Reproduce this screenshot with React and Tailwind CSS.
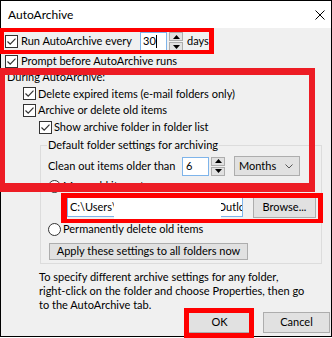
import React from "react";

const Check = () => (
  <span className="w-[13px] h-[13px] border border-[#333333] bg-white flex items-center justify-center shrink-0">
    <svg width="11" height="11" viewBox="0 0 11 11">
      <path d="M1.5 5.5 L4.2 8.2 L9.5 2.6" fill="none" stroke="#333333" strokeWidth="1.2" />
    </svg>
  </span>
);

const Radio = () => (
  <span className="w-[13px] h-[13px] rounded-full border border-[#333333] bg-white shrink-0" />
);

const Spin = () => (
  <div className="w-[14px] h-[19px] flex flex-col gap-[1px] shrink-0">
    <div className="flex-1 bg-[#e1e1e1] border border-[#adadad] flex items-center justify-center">
      <svg width="7" height="4" viewBox="0 0 7 4"><path d="M0 4 L3.5 0 L7 4Z" fill="#000" /></svg>
    </div>
    <div className="flex-1 bg-[#e1e1e1] border border-[#adadad] flex items-center justify-center">
      <svg width="7" height="4" viewBox="0 0 7 4"><path d="M0 0 L3.5 4 L7 0Z" fill="#000" /></svg>
    </div>
  </div>
);

export default function App() {
  return (
    <div className="relative w-[332px] h-[338px] bg-white overflow-hidden font-[Lato,sans-serif] text-[11px] text-black">
      <div className="w-[332px] h-[337px] border border-black bg-[#f0f0f0] flex flex-col">
        {/* title bar */}
        <div className="h-[27px] bg-white flex items-center justify-between pl-[7px] pr-[6px] shrink-0">
          <span className="text-[12px]">AutoArchive</span>
          <svg width="10" height="10" viewBox="0 0 10 10">
            <path d="M0.5 0.5 L9.5 9.5 M9.5 0.5 L0.5 9.5" stroke="#000" strokeWidth="1" />
          </svg>
        </div>

        {/* row 1 */}
        <div className="mt-[4px] h-[20px] flex items-center pl-[4px]">
          <Check />
          <span className="ml-[3px] w-[119px]">Run AutoArchive every</span>
          <div className="w-[27px] h-[19px] bg-white border border-[#7eb4ea] flex items-center pl-[2px]">
            <span>30</span>
            <span className="w-[1px] h-[13px] bg-black" />
          </div>
          <div className="ml-[2px]"><Spin /></div>
          <span className="ml-[4px]">days</span>
        </div>

        {/* row 2 */}
        <div className="h-[16px] mt-[2px] flex items-center pl-[4px]">
          <Check />
          <span className="ml-[3px]">Prompt before AutoArchive runs</span>
        </div>

        <div className="h-[17px] flex items-center pl-[6px]">During AutoArchive:</div>

        <div className="h-[17px] flex items-center pl-[22px]">
          <Check />
          <span className="ml-[2px]">Delete expired items (e-mail folders only)</span>
        </div>
        <div className="h-[17px] flex items-center pl-[22px]">
          <Check />
          <span className="ml-[2px]">Archive or delete old items</span>
        </div>
        <div className="h-[18px] flex items-center pl-[38px]">
          <Check />
          <span className="ml-[2px]">Show archive folder in folder list</span>
        </div>

        {/* group */}
        <fieldset className="mt-[1px] ml-[39px] w-[282px] border border-[#dcdcdc] pb-[3px]">
          <legend className="ml-[6px] px-[1px] leading-[16px]">Default folder settings for archiving</legend>
          <div className="h-[20px] mt-[3px] flex items-center pl-[7px]">
            <span className="w-[134px]">Clean out items older than</span>
            <div className="w-[27px] h-[19px] bg-white border border-[#7eb4ea] flex items-center pl-[3px]">6</div>
            <div className="ml-[2px]"><Spin /></div>
            <div className="ml-[9px] w-[66px] h-[20px] bg-[#e1e1e1] border border-[#adadad] flex items-center justify-between pl-[4px] pr-[6px]">
              <span>Months</span>
              <svg width="8" height="5" viewBox="0 0 8 5"><path d="M0.5 0.5 L4 4 L7.5 0.5" fill="none" stroke="#555" strokeWidth="1" /></svg>
            </div>
          </div>
          <div className="h-[20px] flex items-center pl-[7px]">
            <Radio />
            <span className="ml-[2px]">Move old items to:</span>
          </div>
          <div className="h-[22px] flex items-center pl-[26px]">
            <div className="w-[176px] h-[20px] bg-white border border-[#7eb4ea] flex items-center pl-[2px] overflow-hidden whitespace-nowrap">
              <span>C:\Users\</span>
              <span className="flex-1" />
              <span className="-mr-[3px]">Outlo</span>
            </div>
            <div className="ml-[10px] w-[63px] h-[22px] bg-[#e1e1e1] border border-[#adadad] flex items-center justify-center">Browse...</div>
          </div>
          <div className="h-[16px] mt-[3px] flex items-center pl-[7px]">
            <Radio />
            <span className="ml-[2px]">Permanently delete old items</span>
          </div>
          <div className="mt-[6px] ml-[8px] w-[199px] h-[17px] bg-[#e1e1e1] border border-[#adadad] flex items-center justify-center">
            Apply these settings to all folders now
          </div>
        </fieldset>

        <div className="mt-[6px] pl-[38px] leading-[14px]">
          To specify different archive settings for any folder,<br />
          right-click on the folder and choose Properties, then go<br />
          to the AutoArchive tab.
        </div>

        <div className="mt-auto mb-[3px] flex justify-end gap-[10px] pr-[1px]">
          <div className="w-[67px] h-[21px] bg-[#e1e1e1] border border-[#adadad] flex items-center justify-center">OK</div>
          <div className="w-[67px] h-[21px] bg-[#e1e1e1] border border-[#adadad] flex items-center justify-center">Cancel</div>
        </div>
      </div>

      {/* redaction */}
      <div className="absolute left-[114px] top-[197px] w-[107px] h-[24px] bg-white" />

      {/* red annotation boxes */}
      <div className="absolute left-0 top-[28px] w-[214px] h-[26px] border-[4px] border-r-[5px] border-[#ff0000]" />
      <div className="absolute left-0 top-[68px] w-[315px] h-[124px] border-t-[7px] border-b-[9px] border-l-[5px] border-r-[6px] border-[#ed1c24]" />
      <div className="absolute left-[61px] top-[193px] w-[262px] h-[30px] border-[5px] border-b-[4px] border-l-[6px] border-[#ff0000]" />
      <div className="absolute left-[184px] top-[308px] w-[70px] h-[30px] border-[5px] border-[#ff0000]" />
    </div>
  );
}
